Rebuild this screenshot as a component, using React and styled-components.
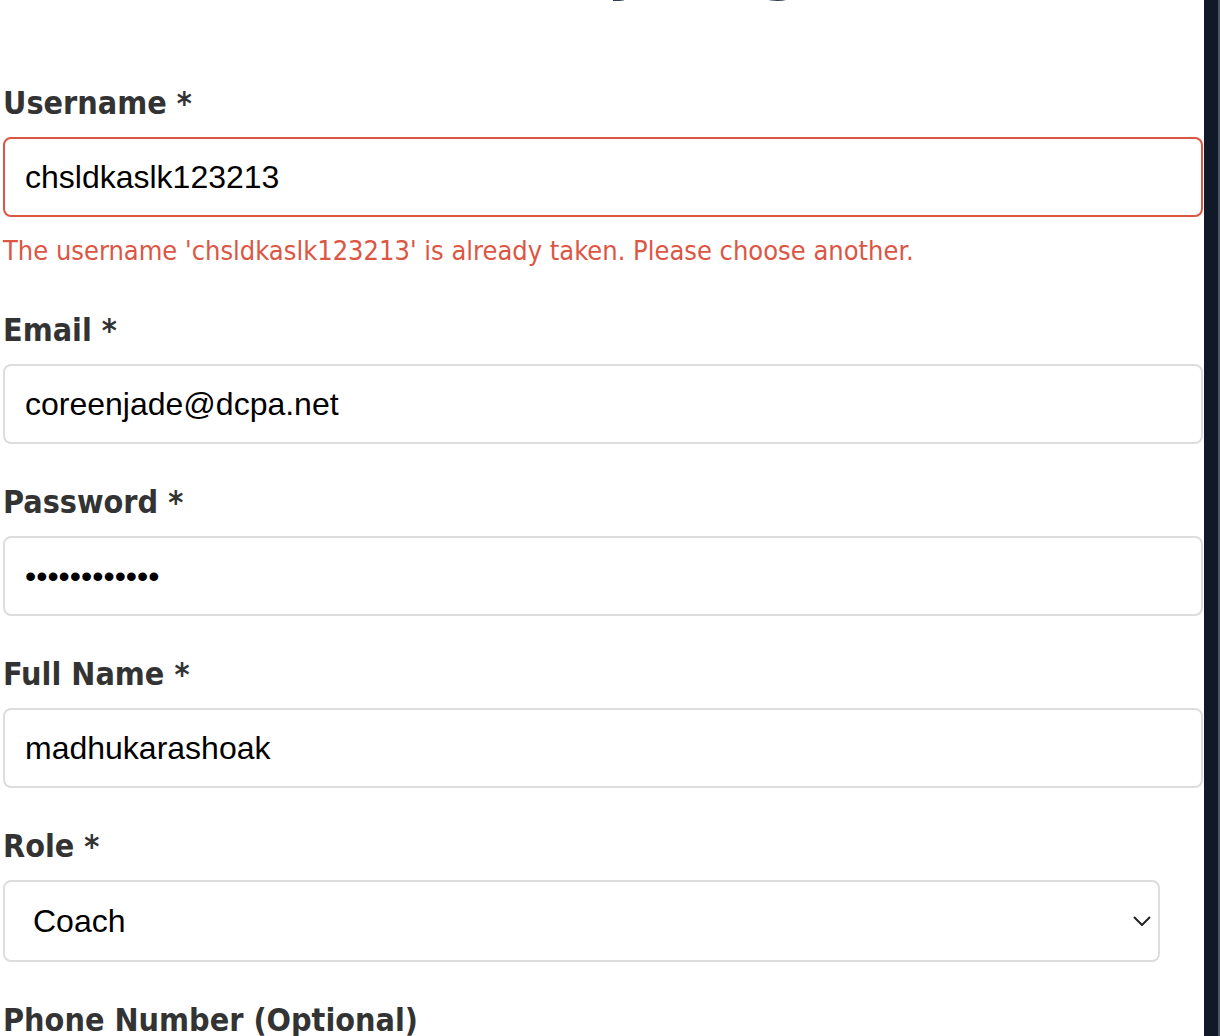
import React from "react";
import styled, { createGlobalStyle } from "styled-components";

const GlobalStyle = createGlobalStyle`
  html, body {
    margin: 0;
    padding: 0;
    background: #ffffff;
  }
  body {
    font-family: "DejaVu Sans", Tahoma, sans-serif;
  }
`;

const Page = styled.div`
  display: flex;
  height: 1036px;
  overflow: hidden;
  background: #ffffff;
`;

const FormColumn = styled.main`
  flex: 1;
  min-width: 0;
  padding: 0 1px 0 3px;
  display: flex;
  flex-direction: column;
`;

const SideEdge = styled.aside`
  width: 14px;
  flex-shrink: 0;
  background: #111827;
  border-right: 2px solid #4b5563;
`;

// only the descenders of the page title peek in at the top edge
const Title = styled.h1`
  margin: -67px 0 0;
  padding-left: 224px;
  height: 68px;
  font-family: "DejaVu Sans", Tahoma, sans-serif;
  font-weight: 700;
  font-size: 62px;
  line-height: 68px;
  color: #2c3e50;
  text-align: center;
  white-space: nowrap;
`;

const Field = styled.div`
  display: flex;
  flex-direction: column;
  margin-top: ${(p) => p.$top || 39}px;
`;

const Label = styled.label`
  font-family: "DejaVu Sans Condensed", "DejaVu Sans", Tahoma, sans-serif;
  font-stretch: condensed;
  font-weight: 700;
  font-size: 32px;
  line-height: 38px;
  color: #333333;
  margin-bottom: 15px;
`;

const Input = styled.input`
  box-sizing: border-box;
  width: 100%;
  height: 80px;
  padding: 0 20px;
  border: 2px solid ${(p) => (p.$error ? "#dc5644" : "#dddddd")};
  border-radius: 8px;
  font-family: "Liberation Sans", Arial, sans-serif;
  font-size: 32px;
  color: #000000;
  background: #ffffff;
  outline: none;
`;

const SelectBox = styled.div`
  box-sizing: border-box;
  width: 1157px;
  height: 82px;
  display: flex;
  align-items: center;
  border: 2px solid #dddddd;
  border-radius: 8px;
  background: #ffffff;
  padding-right: 7px;
`;

const Select = styled.select`
  flex: 1;
  height: 100%;
  appearance: none;
  border: none;
  background: transparent;
  padding: 0 0 0 28px;
  font-family: "Liberation Sans", Arial, sans-serif;
  font-size: 32px;
  color: #000000;
  outline: none;
`;

const Chevron = styled.svg`
  width: 18px;
  height: 10px;
  flex-shrink: 0;
`;

const ErrorText = styled.p`
  margin: 17px 0 4px;
  font-family: "DejaVu Sans Condensed", "DejaVu Sans", Tahoma, sans-serif;
  font-stretch: condensed;
  font-size: 27px;
  line-height: 34px;
  color: #dc5644;
`;

export default function App() {
  return (
    <>
      <GlobalStyle />
      <Page>
        <FormColumn>
          <Title>Academy Registration</Title>

          <Field $top={83}>
            <Label htmlFor="username">Username *</Label>
            <Input id="username" $error defaultValue="chsldkaslk123213" />
            <ErrorText>
              The username 'chsldkaslk123213' is already taken. Please choose another.
            </ErrorText>
          </Field>

          <Field>
            <Label htmlFor="email">Email *</Label>
            <Input id="email" type="email" defaultValue="coreenjade@dcpa.net" />
          </Field>

          <Field>
            <Label htmlFor="password">Password *</Label>
            <Input id="password" type="password" defaultValue="abcdefghijkl" />
          </Field>

          <Field>
            <Label htmlFor="fullname">Full Name *</Label>
            <Input id="fullname" defaultValue="madhukarashoak" />
          </Field>

          <Field>
            <Label htmlFor="role">Role *</Label>
            <SelectBox>
              <Select id="role" defaultValue="coach">
                <option value="coach">Coach</option>
                <option value="player">Player</option>
                <option value="parent">Parent</option>
              </Select>
              <Chevron viewBox="0 0 18 10" fill="none">
                <path d="M1 1l8 8 8-8" stroke="#222" strokeWidth="2" />
              </Chevron>
            </SelectBox>
          </Field>

          <Field>
            <Label htmlFor="phone">Phone Number (Optional)</Label>
          </Field>
        </FormColumn>
        <SideEdge />
      </Page>
    </>
  );
}
